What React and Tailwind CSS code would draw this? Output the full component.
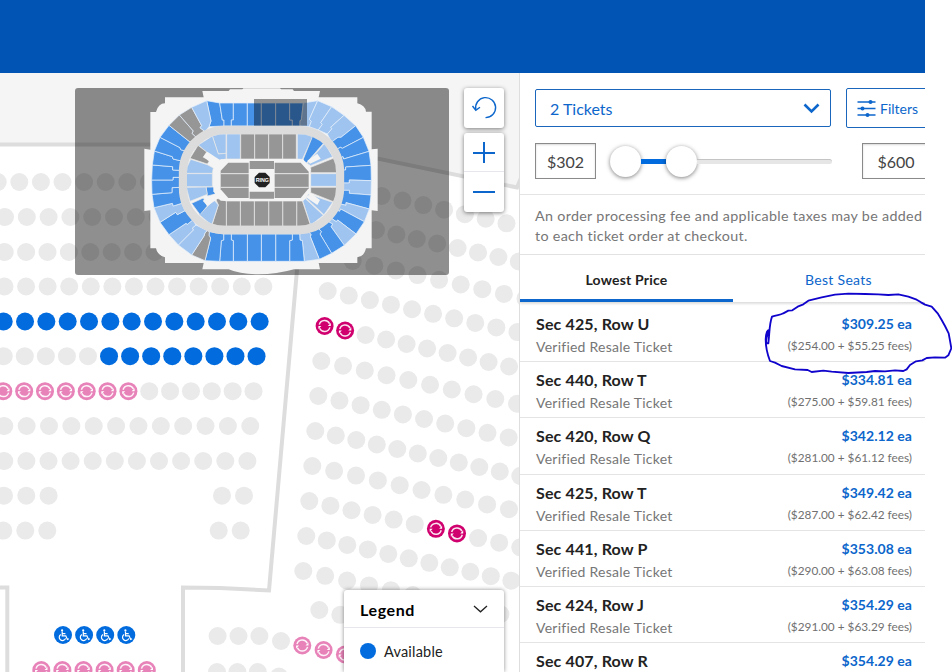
const BLUE = "#026cdf";
const RESALE = "#d0006f";
const RESALE_LIGHT = "#e883b9";
const OPEN = "#4592e8";
const PARTIAL = "#9fc4ef";
const SOLD = "#969696";

// x, y of the first seat, distance to the next one, seat count, optional colours by index
const seatRows = [
    { x: -2.3, y: 182, dx: 21.6, dy: 0, n: 13 },
    { x: 5, y: 217, dx: 21.8, dy: 0, n: 13 },
    { x: 4.7, y: 252, dx: 21.4, dy: 0, n: 13 },
    { x: 4.5, y: 286.5, dx: 21.57, dy: 0, n: 13 },
    { x: 3.7, y: 321.5, dx: 21.33, dy: 0, n: 13, type: () => "available" },
    { x: 3.7, y: 356.2, dx: 21.07, dy: 0, n: 13, type: (i) => (i > 4 ? "available" : "none") },
    { x: 3.3, y: 391.2, dx: 20.85, dy: 0, n: 13, type: (i) => (i < 7 ? "resaleLight" : "none") },
    { x: 4.3, y: 426, dx: 22.36, dy: 0, n: 12 },
    { x: 4.3, y: 461, dx: 22.1, dy: 0, n: 12 },
    { x: 4, y: 495.7, dx: 22.3, dy: 0, n: 3 },
    { x: 222, y: 495.7, dx: 22, dy: 0, n: 2 },
    { x: 3.3, y: 530.6, dx: 22, dy: 0, n: 3 },
    { x: 218.7, y: 530.6, dx: 22, dy: 0, n: 2 },
    { x: 63, y: 635, dx: 21.1, dy: 0, n: 4, type: () => "accessible" },
    { x: 41.3, y: 670, dx: 21.1, dy: 0, n: 6, type: () => "resaleLight" },
    { x: 217.6, y: 636, dx: 20.9, dy: 0, n: 3 },
    { x: 281, y: 641, dx: 21.3, dy: 4.5, n: 4, type: (i) => (i > 0 ? "resaleLight" : "none") },
    { x: 217, y: 672, dx: 20.4, dy: 0, n: 3 },
    { x: 279, y: 676.5, dx: 21, dy: 4.5, n: 2, type: (i) => (i > 0 ? "resale" : "none") },
    { x: 381.7, y: 196, dx: 20.8, dy: 4.55, n: 7 },
    { x: 355.6, y: 225.5, dx: 20.4, dy: 4.5, n: 9 },
    { x: 352.7, y: 261, dx: 21.6, dy: 4.7, n: 9 },
    { x: 327.7, y: 291, dx: 21.08, dy: 4.56, n: 10 },
    { x: 324.6, y: 326, dx: 20.5, dy: 4.5, n: 10, type: (i) => (i < 2 ? "resale" : "none") },
    { x: 321.3, y: 361, dx: 21.75, dy: 4.75, n: 10 },
    { x: 318.3, y: 396, dx: 21.15, dy: 4.6, n: 10 },
    { x: 315.3, y: 431, dx: 20.5, dy: 4.5, n: 11 },
    { x: 312.3, y: 466, dx: 21.85, dy: 4.8, n: 10 },
    { x: 309.3, y: 501, dx: 21.1, dy: 4.63, n: 11, type: (i) => (i === 6 || i === 7 ? "resale" : "none") },
    { x: 306.3, y: 536, dx: 20.5, dy: 4.47, n: 11 },
    { x: 303.3, y: 571, dx: 21.9, dy: 4.8, n: 10 },
    { x: 319.3, y: 610, dx: 21, dy: 4.8, n: 3 },
];

// section borders of the upper bowl, outer edge first, with the fill of the section that follows
const bowl = [
    ["410,62 423,123 417,140", OPEN],
    ["449,69 457,120 462,120 462,138", OPEN],
    ["490,69 490,120 484,120 484,138", OPEN],
    ["532,69 532,138", OPEN],
    ["574,69 574,138", OPEN],
    ["617,69 617,138", OPEN],
    ["659,69 659,120 667,120 667,138", OPEN],
    ["700,69 694,120 690,122 690,138", PARTIAL],
    ["743,62 718,118 724,124 718,140", PARTIAL],
    ["785,80 752,128 757,133 745,150", PARTIAL],
    ["822,106 782,142 786,146 772,162", PARTIAL],
    ["857,137 813,172 804,172 785,186", OPEN],
    ["880,172 817,205 811,202 795,211", OPEN],
    ["897,214 821,237 819,230 803,238", OPEN],
    ["903,256 827,261 827,270 810,271", OPEN],
    ["904,302 838,300 838,309 812,309", PARTIAL],
    ["903,345 838,340 838,331 812,331", OPEN],
    ["898,387 828,368 828,376 808,371", PARTIAL],
    ["883,425 812,387 809,394 795,388", OPEN],
    ["858,462 803,420 799,425 780,412", PARTIAL],
    ["823,496 783,440 788,432 775,425", OPEN],
    ["785,520 750,462 754,455 745,445", OPEN],
    ["748,538 721,470 723,464 716,455", PARTIAL],
    ["703,544 697,482 690,480 689,462", OPEN],
    ["659,544 659,482 667,480 667,462", OPEN],
    ["617,544 617,462", OPEN],
    ["574,544 574,462", OPEN],
    ["532,544 532,462", OPEN],
    ["490,544 490,482 484,480 484,462", OPEN],
    ["449,544 454,482 461,480 461,462", OPEN],
    ["405,542 422,474 417,466 418,455", SOLD],
    ["365,525 402,468 405,458 412,452", PARTIAL],
    ["325,495 370,450 367,444 378,435", PARTIAL],
    ["297,464 348,430 352,433 368,420", OPEN],
    ["270,427 317,397 322,404 345,392", PARTIAL],
    ["252,383 307,370 310,378 335,370", OPEN],
    ["246,343 306,338 306,323 330,322", OPEN],
    ["245,300 309,300 309,292 330,292", OPEN],
    ["247,255 308,260 308,270 330,271", OPEN],
    ["253,213 307,230 309,237 335,243", OPEN],
    ["270,172 330,203 332,209 348,214", OPEN],
    ["297,136 360,186 366,182 376,190", SOLD],
    ["328,105 370,153 366,160 382,175", SOLD],
    ["365,82 395,137 390,143 405,155", PARTIAL],
];

const lowerBowl = [
    ["427,168 450,162 468,162 468,220 445,222", PARTIAL],
    ["385,195 427,168 445,222 468,220 468,237 440,242", PARTIAL],
    ["470,162 511,162 511,237 470,237", PARTIAL],
    ["512,162 554,162 554,237 512,237", SOLD],
    ["554,162 596,162 596,237 554,237", SOLD],
    ["596,162 638,162 638,237 596,237", SOLD],
    ["638,162 679,162 679,237 638,237", SOLD],
    ["682,162 710,162 728,170 697,238 682,237", PARTIAL],
    ["698,242 728,168 762,188 710,248", OPEN],
    ["712,250 764,190 788,230 722,257", PARTIAL],
    ["722,262 790,235 800,255 800,278 722,278", SOLD],
    ["722,281 800,281 800,319 722,319", PARTIAL],
    ["722,322 800,322 800,345 790,365 722,338", SOLD],
    ["715,342 788,367 762,404 708,354", PARTIAL],
    ["698,362 706,356 760,406 722,436", PARTIAL],
    ["680,363 697,363 722,438 680,438", SOLD],
    ["638,363 680,363 680,438 638,438", SOLD],
    ["596,363 638,363 638,438 596,438", SOLD],
    ["553,363 596,363 596,438 553,438", SOLD],
    ["511,363 553,363 553,438 511,438", SOLD],
    ["469,363 511,363 511,438 469,438", SOLD],
    ["436,354 469,363 469,438 425,438 445,375", SOLD],
    ["388,404 432,360 445,375 425,436", PARTIAL],
    ["365,370 400,354 412,378 390,404", OPEN],
    ["408,321 432,321 436,342 412,348", OPEN],
    ["349,322 408,321 412,343 360,364", PARTIAL],
    ["349,281 427,281 427,320 349,320", PARTIAL],
    ["362,238 412,254 430,264 427,280 349,280 351,262", PARTIAL],
    ["384,196 410,216 400,232 420,240 412,252 360,235", SOLD],
];

const listings = [
    { seat: "Sec 425, Row U", type: "Verified Resale Ticket", price: "$309.25 ea", detail: "($254.00 + $55.25 fees)" },
    { seat: "Sec 440, Row T", type: "Verified Resale Ticket", price: "$334.81 ea", detail: "($275.00 + $59.81 fees)" },
    { seat: "Sec 420, Row Q", type: "Verified Resale Ticket", price: "$342.12 ea", detail: "($281.00 + $61.12 fees)" },
    { seat: "Sec 425, Row T", type: "Verified Resale Ticket", price: "$349.42 ea", detail: "($287.00 + $62.42 fees)" },
    { seat: "Sec 441, Row P", type: "Verified Resale Ticket", price: "$353.08 ea", detail: "($290.00 + $63.08 fees)" },
    { seat: "Sec 424, Row J", type: "Verified Resale Ticket", price: "$354.29 ea", detail: "($291.00 + $63.29 fees)" },
    { seat: "Sec 407, Row R", price: "$354.29 ea" },
];

const Seat = ({ x, y, type }) => {
    if (type === "available") return <circle cx={x} cy={y} r="9" fill={BLUE} />;
    if (type === "accessible") {
        return (
            <g transform={`translate(${x} ${y})`} fill="none" stroke="#fff" strokeWidth="1.2">
                <circle r="9" fill={BLUE} stroke="none" />
                <circle cx="-0.9" cy="-4.6" r="1.1" fill="#fff" stroke="none" />
                <path d="M-0.8 -3.4 V0.8 H2.8 L4.4 4.4 L5.8 3.8 M-0.8 -1.4 H2.4" />
                <path d="M-2.2 -0.6 A3.3 3.3 0 1 0 2.6 3.4" />
            </g>
        );
    }
    if (type === "resale" || type === "resaleLight") {
        const color = type === "resale" ? RESALE : RESALE_LIGHT;
        return (
            <g transform={`translate(${x} ${y})`}>
                <circle r="9" fill={color} />
                <path
                    d="M-5.3 -1.4 A5.5 5.5 0 0 1 5 -2.2 M5.3 1.4 A5.5 5.5 0 0 1 -5 2.2"
                    fill="none"
                    stroke="#fff"
                    strokeOpacity="0.9"
                    strokeWidth="1.5"
                />
                <path d="M6.200 -3 V0 H3.200 Z M-6.200 3 V0 H-3.200 Z" fill="#fff" />
            </g>
        );
    }
    return <circle cx={x} cy={y} r="9" fill="#eaeaea" />;
};

const SeatMap = () => (
    <svg width="519" height="599" viewBox="0 73 519 599" className="block">
        <rect y="73" width="519" height="599" fill="#fff" />
        <path d="M0 73 H519 V188 L305 144.500 H0 Z" fill="#f5f5f5" />
        <g fill="none" stroke="#dddddd" strokeWidth="4">
            <path d="M-5 144.500 H310 L517 187.500 L521 178" />
            <path d="M308 144 L269 590.500 L220 588 L183 587.500 V680" />
            <path d="M-5 587.500 H7.300 V680" />
        </g>
        {seatRows.map((row, r) =>
            Array.from({ length: row.n }, (_, i) => (
                <Seat
                    key={`${r}-${i}`}
                    x={row.x + i * row.dx}
                    y={row.y + i * row.dy}
                    type={row.type ? row.type(i) : "none"}
                />
            ))
        )}
    </svg>
);

const MiniMap = () => (
    <svg
        width="374"
        height="187"
        viewBox="15 24 1122 561"
        className="absolute left-[75px] top-[15px] rounded-[3px] bg-black/44"
    >
        <path
            d="M397 33 H476 L480 28 H517 L520 25 H630 L633 28 H668 L672 33 H750 L746 52 H862 V70 Q885 75 888 95 H905 V208 L923 206 V393 L905 391 V505 H888 Q882 530 862 532 V549 H746 L750 568 H672 Q620 583 565 583 Q510 583 476 568 H397 L401 549 H285 V532 Q262 525 258 505 H241 V391 L223 393 V206 L241 209 V96 H258 Q265 70 285 70 V52 H401 Z"
            fill="#f4f4f4"
        />
        {bowl.map(([line, fill], i) => {
            const next = bowl[(i + 1) % bowl.length][0].split(" ").reverse().join(" ");
            return (
                <polygon key={i} points={`${line} ${next}`} fill={fill} stroke="#e3eefb" strokeWidth="2.2" />
            );
        })}
        <rect x="339" y="150" width="471" height="300" rx="126" fill="#f4f4f4" stroke="#dcdcdc" strokeWidth="25" />
        <clipPath id="lower">
            <rect x="351" y="162" width="447" height="276" rx="114" />
        </clipPath>
        <g clipPath="url(#lower)" stroke="#e8e8e8" strokeWidth="2.2">
            {lowerBowl.map(([points, fill], i) => (
                <polygon key={i} points={points} fill={fill} />
            ))}
        </g>
        <g fill="#f4f4f4">
            <path d="M452 238 H700 L721 268 V334 L700 362 H452 L430 334 V268 Z" />
            <path d="M400 230 L412 215 L450 240 L434 258 Z" />
            <path d="M398 362 L434 342 L450 352 L412 378 Z" />
            <path d="M712 242 L742 221 L752 236 L720 251 Z" />
            <path d="M708 352 L722 340 L750 360 L742 375 Z" />
        </g>
        <path d="M452 272 L475 248 H692 L716 275 V325 L692 354 H475 L452 328 Z" fill={SOLD} />
        <path d="M452 281 H716 M452 322 H716" stroke="#e8e8e8" strokeWidth="3" />
        <path d="M536 242 H614 V357 H536 Z" fill="#f4f4f4" />
        <path d="M539 243 H612 V267 H539 Z M539 335 H612 V356 H539 Z" fill={SOLD} />
        <path d="M567 278 H586 L599 291 V309 L586 322 H567 L554 309 V291 Z" fill="#222" />
        <text x="577" y="306" textAnchor="middle" fontSize="16" fontWeight="700" fill="#fff" fontFamily="Liberation Sans">
            RING
        </text>
        <rect x="552" y="57" width="159" height="80" fill="#000" opacity="0.4" />
    </svg>
);

const MapControls = () => (
    <div className="absolute left-[464px] top-[15px] flex w-10 flex-col gap-[5px] text-[#0c66cb]">
        <button className="flex h-10 items-center justify-center rounded-[3px] bg-white shadow-[0_1px_4px_rgba(0,0,0,0.5)]">
            <svg width="26" height="24" viewBox="0 0 26 24" fill="none" stroke="currentColor" strokeWidth="1.4">
                <path d="M4.8 13.500 A10 10 0 1 1 14.500 21.600" />
                <path d="M1.500 10 L4.800 14.200 L9 11.200" />
            </svg>
        </button>
        <div className="flex flex-col rounded-[3px] bg-white shadow-[0_1px_4px_rgba(0,0,0,0.5)]">
            <button className="flex h-[39px] items-center justify-center border-b border-gray-200">
                <svg width="22" height="22" viewBox="0 0 22 22" stroke="currentColor" strokeWidth="2">
                    <path d="M0 12 H22 M11 1 V22" />
                </svg>
            </button>
            <button className="flex h-10 items-center justify-center">
                <svg width="22" height="2" viewBox="0 0 22 2" stroke="currentColor" strokeWidth="2">
                    <path d="M0 1 H22" />
                </svg>
            </button>
        </div>
    </div>
);

const Legend = () => (
    <div className="absolute bottom-0 left-[344px] h-[82px] w-40 rounded-t-[3px] bg-white shadow-[0_0_4px_rgba(0,0,0,0.45)]">
        <div className="flex h-[38px] items-center justify-between border-b border-gray-200 pl-4 pr-4">
            <span className="pt-0.5 text-[16px] font-bold tracking-[0.6px] text-black">Legend</span>
            <svg width="15" height="8" viewBox="0 0 15 8" fill="none" stroke="#222" strokeWidth="1.3">
                <path d="M1 1 L7.500 6.800 L14 1" />
            </svg>
        </div>
        <div className="flex h-[46px] items-center gap-2 pl-4">
            <span className="h-4 w-4 rounded-full bg-[#026cdf]" />
            <span className="pt-px text-[14.5px] tracking-[0.2px] text-[#222]">Available</span>
        </div>
    </div>
);

const Filters = () => (
    <div className="h-[122px] shrink-0 border-b border-[#e4e4e4] pl-[15px] pt-[15px]">
        <div className="flex w-[420px] gap-[15px]">
            <div className="mt-px flex h-[38px] w-[296px] items-center justify-between rounded-[2px] border border-[#1a66bd] pl-3.5 pr-2.5 text-[#0c66cb]">
                <span className="pt-0.5 text-base">2 Tickets</span>
                <svg width="17" height="11" viewBox="0 0 17 11" fill="none" stroke="currentColor" strokeWidth="2.6">
                    <path d="M1.500 1.500 L8.500 8.500 L15.500 1.500" />
                </svg>
            </div>
            <div className="flex h-10 w-[100px] items-center gap-1 rounded-[2px] border border-[#1a66bd] pl-2.5 text-[#0c66cb]">
                <svg width="19" height="18" viewBox="0 0 19 18" stroke="currentColor" strokeWidth="1.5">
                    <path d="M0.500 3 H18.500 M0.500 9.500 H18.500 M0.500 16 H18.500" />
                    <g fill="currentColor" stroke="none">
                        <circle cx="13.500" cy="3" r="2" />
                        <circle cx="5.500" cy="9.500" r="2" />
                        <circle cx="10.500" cy="16" r="2" />
                    </g>
                </svg>
                <span className="pt-0.5 text-sm">Filters</span>
            </div>
        </div>
        <div className="mt-[15px] flex w-[420px] items-center">
            <div className="flex h-9 w-[61px] items-center justify-center border border-[#8a8a8a] pt-0.5 text-base text-[#444] shadow-[inset_0_1px_2px_rgba(0,0,0,0.15)]">
                $302
            </div>
            <div className="ml-3.5 flex w-[222px] items-center">
                <div className="h-[31px] w-[31px] rounded-full bg-white shadow-[0_1px_4px_rgba(0,0,0,0.5)]" />
                <div className="h-[5px] w-[25px] bg-[#026cdf]" />
                <div className="h-[31px] w-[31px] rounded-full bg-white shadow-[0_1px_4px_rgba(0,0,0,0.5)]" />
                <div className="h-[5px] flex-1 rounded-r-sm border-t border-[#c4c4c4] bg-[#e6e6e6]" />
            </div>
            <div className="ml-[30px] flex h-9 w-[68px] items-center justify-center border border-[#8a8a8a] pt-0.5 text-base text-[#444] shadow-[inset_0_1px_2px_rgba(0,0,0,0.15)]">
                $600
            </div>
        </div>
    </div>
);

const Listing = ({ seat, type, price, detail }) => (
    <div className="flex h-[56.200px] shrink-0 justify-between border-b border-[#e4e4e4] pl-4 pr-[13px]">
        <div>
            <div className="mt-[7px] whitespace-nowrap text-[16px] font-bold leading-[22px] tracking-[0.15px] text-[#222]">{seat}</div>
            {type && (
                <div className="mt-[2px] whitespace-nowrap text-[14px] leading-[20px] tracking-[0.24px] text-[#767676]">{type}</div>
            )}
        </div>
        <div className="text-right">
            <div className="mt-[7px] whitespace-nowrap text-[14px] font-bold leading-[22px] tracking-[0.05px] text-[#0c66cb]">{price}</div>
            {detail && (
                <div className="mt-px whitespace-nowrap text-[11.8px] leading-[20px] text-[#707070]">{detail}</div>
            )}
        </div>
    </div>
);

const App = () => {
    return (
        <div className="relative h-[672px] w-[952px] overflow-hidden bg-white font-['Lato',sans-serif]">
            <div className="flex h-full w-[925px] flex-col">
                <header className="h-[73px] shrink-0 bg-[#0254b4]" />
                <main className="flex h-[599px]">
                    <section className="relative w-[519px] shrink-0 overflow-hidden">
                        <SeatMap />
                        <MiniMap />
                        <MapControls />
                        <Legend />
                    </section>
                    <aside className="flex w-[406px] flex-col overflow-hidden border-l border-[#dedede] bg-white">
                        <Filters />
                        <p className="h-[60px] shrink-0 whitespace-nowrap border-b border-[#e4e4e4] pl-[15px] pt-[11px] text-[14.3px] leading-[20px] tracking-[0.32px] text-[#767676]">
                            An order processing fee and applicable taxes may be added
                            <br />
                            to each ticket order at checkout.
                        </p>
                        <div className="flex h-12 shrink-0 border-b border-[#e0e0e0] text-[14px] leading-[49px] shadow-[0_1px_2px_rgba(0,0,0,0.12)]">
                            <div className="w-[213px] shrink-0 border-b-[3px] border-[#0c66cb] text-center font-bold tracking-[0.2px] text-[#222]">
                                Lowest Price
                            </div>
                            <div className="w-[211px] shrink-0 text-center tracking-[0.3px] text-[#0c66cb]">Best Seats</div>
                        </div>
                        <div className="flex flex-col pt-[3px]">
                            {listings.map((item) => (
                                <Listing key={item.seat} {...item} />
                            ))}
                        </div>
                    </aside>
                </main>
            </div>
            <svg
                width="437"
                height="210"
                viewBox="0 0 1311 630"
                className="pointer-events-none absolute left-[515px] top-[250px]"
                fill="none"
                stroke="#1004cc"
                strokeWidth="5.5"
                strokeLinejoin="round"
            >
                <path d="M762 240 C752 270 750 282 760 280 C764 250 762 225 771 200 C785 194 795 196 805 190 L820 182 L832 181 L848 170 L865 163 L880 152 L920 142 L960 134 L1000 131 L1050 132 L1090 133 L1120 135 L1150 133 L1180 140 L1205 149 L1218 157 L1230 164 L1250 170 L1268 190 L1280 210 L1290 228 L1301 250 L1305 272 L1309 295 L1300 316 L1290 323 L1260 322 L1235 324 L1222 331 L1203 334 L1185 345 L1175 358 L1165 363 L1140 361 L1110 364 L1080 363 L1055 366 L1000 369 L950 365 L925 362 L890 366 L878 360 L840 358 L800 348 L780 338 L765 333 C758 315 752 290 752 268 C753 250 758 240 762 240" />
            </svg>
        </div>
    );
};

export default App;
